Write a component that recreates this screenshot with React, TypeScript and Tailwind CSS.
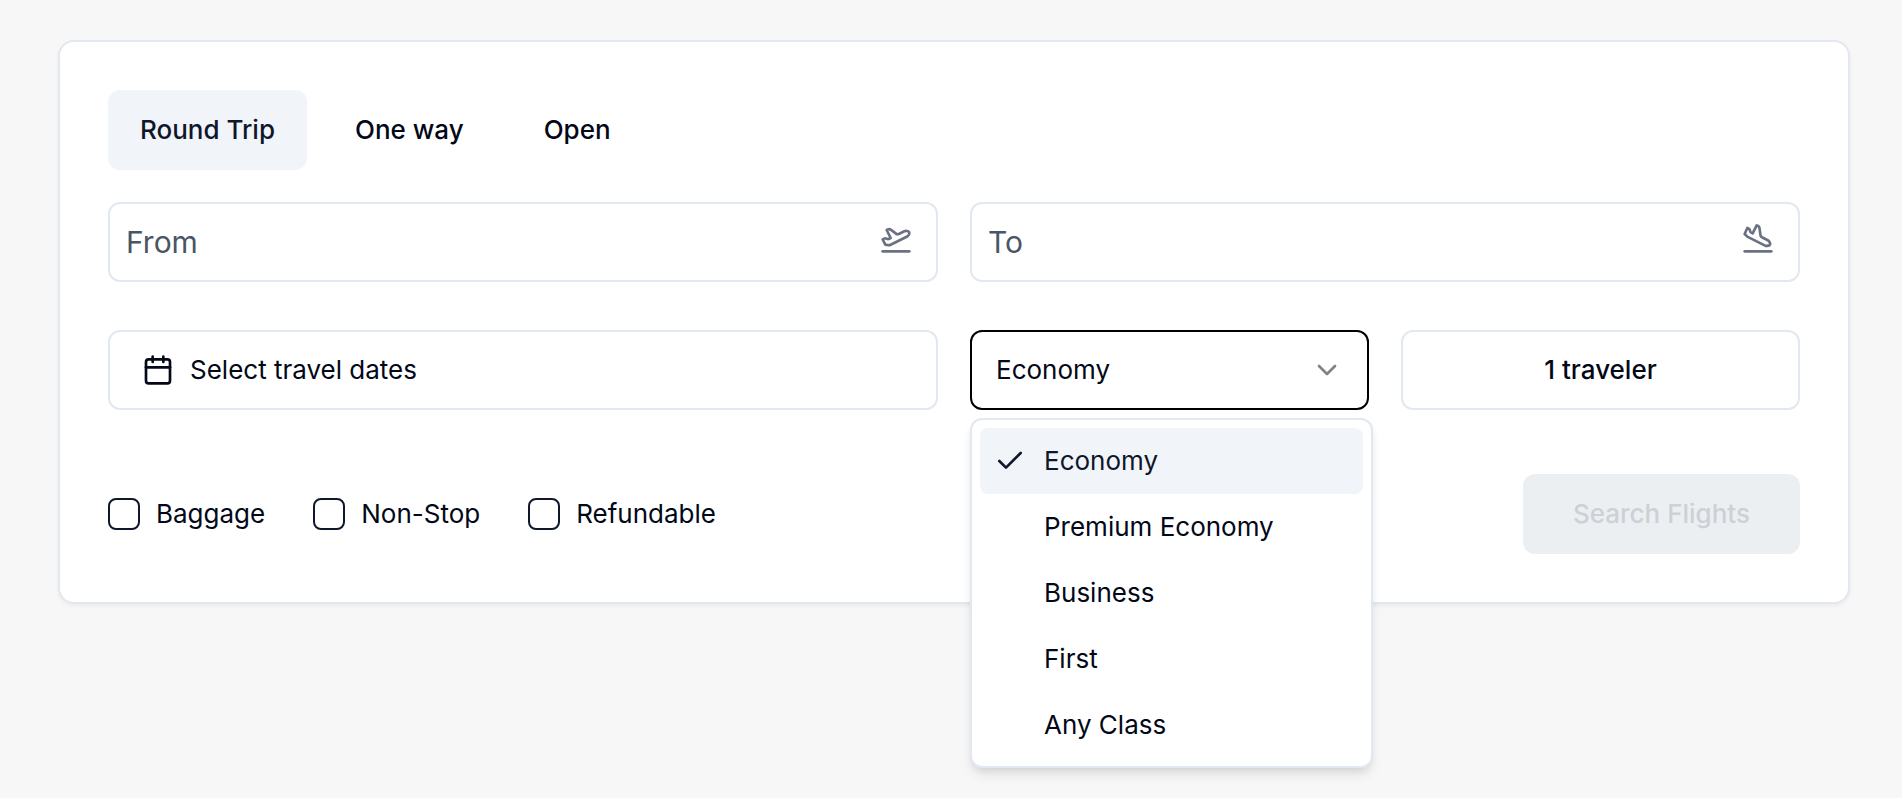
import { useState } from "react";
import type { ReactNode } from "react";
import { Calendar, Check, ChevronDown, PlaneLanding, PlaneTakeoff } from "lucide-react";

const tripTypes = ["Round Trip", "One way", "Open"];
const cabinClasses = ["Economy", "Premium Economy", "Business", "First", "Any Class"];
const filters = ["Baggage", "Non-Stop", "Refundable"];

function AirportInput({ label, icon }: { label: string; icon: ReactNode }) {
  const [value, setValue] = useState("");

  return (
    <div className="relative">
      <input
        type="text"
        aria-label={label}
        placeholder={label}
        value={value}
        onChange={(e) => setValue(e.target.value)}
        className="h-20 w-full rounded-xl border-2 border-slate-200 bg-white pr-16 pl-4 text-[30px] text-[#020817] outline-none placeholder:text-gray-600 focus:border-black"
      />
      <span className="pointer-events-none absolute top-5 right-[26px] text-gray-500">
        {icon}
      </span>
    </div>
  );
}

function CabinSelect() {
  const [open, setOpen] = useState(true);
  const [cabin, setCabin] = useState("Economy");

  function choose(value: string) {
    setCabin(value);
    setOpen(false);
  }

  return (
    <div className="relative">
      <select
        aria-label="Cabin class"
        value={cabin}
        onChange={(e) => choose(e.target.value)}
        onMouseDown={(e) => {
          e.preventDefault();
          setOpen(!open);
        }}
        className={`h-20 w-full appearance-none rounded-xl border-2 bg-white px-6 outline-none ${
          open ? "border-black" : "border-slate-200"
        }`}
      >
        {cabinClasses.map((c) => (
          <option key={c} value={c}>
            {c}
          </option>
        ))}
      </select>
      <ChevronDown
        size={32}
        className="pointer-events-none absolute top-6 right-[26px] opacity-50"
      />

      {open && (
        <ul
          role="listbox"
          aria-label="Cabin class"
          className="absolute top-full left-0 z-10 mt-2 w-[calc(100%+4px)] rounded-xl border-2 border-slate-200 bg-white p-2 shadow-[0_8px_12px_-2px_rgba(0,0,0,0.1),0_4px_8px_-4px_rgba(0,0,0,0.1)]"
        >
          {cabinClasses.map((c) => {
            const selected = c === cabin;
            return (
              <li
                key={c}
                role="option"
                aria-selected={selected}
                onClick={() => choose(c)}
                className={`flex h-[66px] cursor-default items-center gap-[18px] rounded-lg px-[14px] ${
                  selected ? "bg-slate-100 text-slate-900" : "hover:bg-slate-100"
                }`}
              >
                <span className="flex w-8 justify-center">
                  {selected && <Check size={32} />}
                </span>
                {c}
              </li>
            );
          })}
        </ul>
      )}
    </div>
  );
}

export default function App() {
  const [trip, setTrip] = useState("Round Trip");

  return (
    <main className="min-h-screen bg-[#f7f7f7] pt-10 pr-[52px] pb-10 pl-[58px] font-[Inter,sans-serif] text-[26px] leading-10 text-[#020817]">
      <form
        onSubmit={(e) => e.preventDefault()}
        className="rounded-2xl border-2 border-slate-200 bg-white p-12 shadow-[0_2px_4px_rgba(0,0,0,0.05)]"
      >
        <div className="flex gap-4">
          {tripTypes.map((t) => (
            <button
              key={t}
              type="button"
              aria-pressed={t === trip}
              onClick={() => setTrip(t)}
              className={`h-20 rounded-xl px-8 font-medium ${
                t === trip ? "bg-slate-100 text-slate-900" : "hover:bg-slate-100"
              }`}
            >
              {t}
            </button>
          ))}
        </div>

        <div className="mt-8 grid grid-cols-2 gap-8">
          <AirportInput label="From" icon={<PlaneTakeoff size={32} />} />
          <AirportInput label="To" icon={<PlaneLanding size={32} />} />
        </div>

        <div className="mt-12 grid grid-cols-2 gap-8">
          <button
            type="button"
            className="flex h-20 items-center gap-4 rounded-xl border-2 border-slate-200 px-8"
          >
            <Calendar size={32} />
            Select travel dates
          </button>
          <div className="grid grid-cols-2 gap-8">
            <CabinSelect />
            <button
              type="button"
              className="h-20 rounded-xl border-2 border-slate-200 font-medium"
            >
              1 traveler
            </button>
          </div>
        </div>

        <div className="mt-16 flex items-center justify-between">
          <div className="flex gap-12">
            {filters.map((f) => (
              <label key={f} className="flex items-center gap-4">
                <input
                  type="checkbox"
                  className="size-8 appearance-none rounded-lg border-2 border-slate-900 checked:bg-slate-900"
                />
                {f}
              </label>
            ))}
          </div>
          <button
            type="submit"
            disabled
            className="h-20 rounded-xl bg-[#ebeff2] px-[50px] font-medium text-[#cdd0d6]"
          >
            Search Flights
          </button>
        </div>
      </form>
    </main>
  );
}
